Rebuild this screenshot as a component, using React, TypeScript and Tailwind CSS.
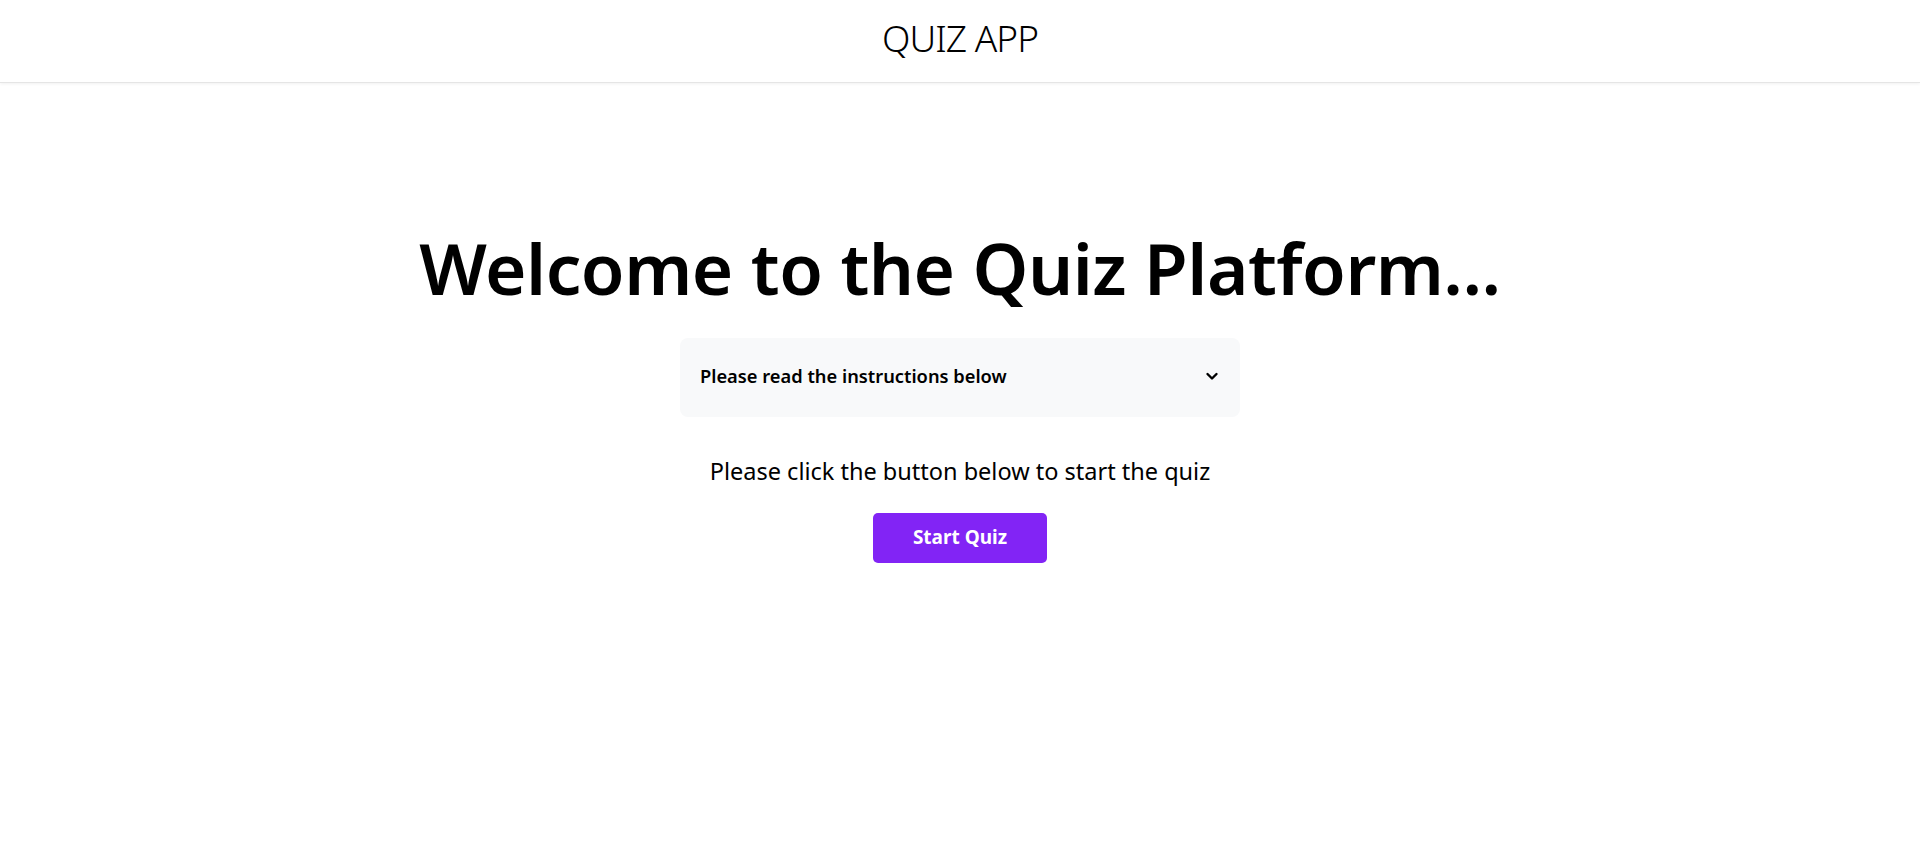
import React, { useState } from "react";

const App: React.FC = () => {
  const [open, setOpen] = useState(false);

  return (
    <div className="min-h-screen bg-white text-black" style={{ fontFamily: '"Noto Sans", "Open Sans", sans-serif' }}>
      {/* Header */}
      <header className="h-[83px] flex items-center justify-center pb-[8px] border-b border-[#e5e5e5] shadow-[0_1px_3px_rgba(0,0,0,0.06)]">
        <h1 className="text-[37px] font-light tracking-tight leading-none">QUIZ APP</h1>
      </header>

      {/* Main */}
      <main className="flex flex-col items-center pt-[142px]">
        <h2 className="text-[71px] font-semibold leading-[1.2] tracking-[-0.5px]">Welcome to the Quiz Platform...</h2>

        <div className="w-[560px] mt-[28px] rounded-lg bg-[#f8f9fa]">
          <button
            onClick={() => setOpen(!open)}
            className="w-full h-[79px] flex items-center justify-between px-5 pb-[3px] text-left"
          >
            <span className="text-[18.3px] font-semibold">Please read the instructions below</span>
            <svg width="16" height="16" viewBox="0 0 16 16" className={open ? "rotate-180" : ""}>
              <path d="M3.5 6 L8 10.5 L12.5 6" fill="none" stroke="black" strokeWidth="2.4" strokeLinecap="round" strokeLinejoin="round" />
            </svg>
          </button>
        </div>

        <p className="mt-[40px] text-[23.5px] leading-tight">Please click the button below to start the quiz</p>

        <button className="mt-[26px] w-[174px] h-[50px] rounded-[5px] bg-[#8224f5] text-white text-[19px] font-bold">
          Start Quiz
        </button>
      </main>
    </div>
  );
};

export default App;
